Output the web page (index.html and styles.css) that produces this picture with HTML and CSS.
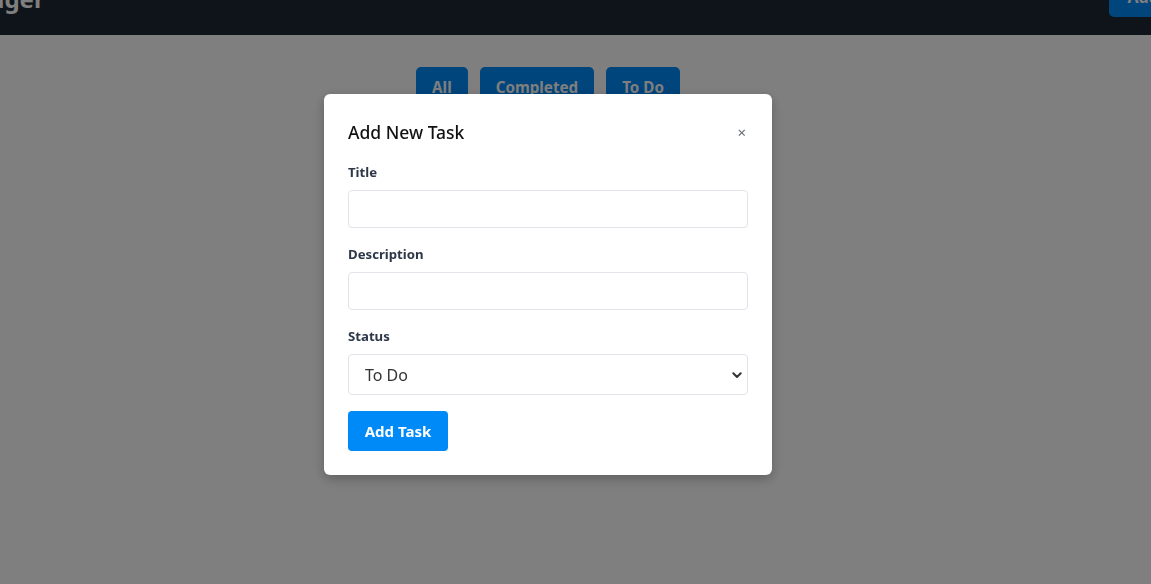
FILE: index.html
```html
<!DOCTYPE html>
<html lang="en">
<head>
<meta charset="utf-8">
<title>Task Manager</title>
<link rel="stylesheet" href="styles.css">
</head>
<body>
<header class="topbar">
  <h1 class="brand">Task Manager</h1>
  <button class="btn btn-primary topbar-btn">Add Task</button>
</header>
<main class="main">
  <div class="filters">
    <button class="btn btn-primary filter">All</button>
    <button class="btn btn-primary filter">Completed</button>
    <button class="btn btn-primary filter">To Do</button>
  </div>
</main>
<div class="overlay">
  <div class="overlay-inner">
    <div class="modal">
      <div class="modal-head">
        <h2 class="modal-title">Add New Task</h2>
        <button class="close">×</button>
      </div>
      <div class="field">
        <label class="label">Title</label>
        <input class="input" type="text">
      </div>
      <div class="field">
        <label class="label">Description</label>
        <input class="input" type="text">
      </div>
      <div class="field">
        <label class="label">Status</label>
        <div class="select-wrap">
          <select class="input select">
            <option>To Do</option>
            <option>Completed</option>
          </select>
          <svg class="chev" width="10" height="7" viewBox="0 0 10 7"><path d="M1.3 1.3 L5 5 L8.7 1.3" fill="none" stroke="#333" stroke-width="2" stroke-linecap="round" stroke-linejoin="round"/></svg>
        </div>
      </div>
      <button class="btn btn-primary submit">Add Task</button>
    </div>
  </div>
</div>
</body>
</html>
```

FILE: styles.css
```css
* { box-sizing: border-box; }
html, body { margin: 0; padding: 0; }
body {
  width: 1151px;
  height: 584px;
  overflow: hidden;
  background: #ffffff;
  font-family: "Noto Sans", "Open Sans", Arial, sans-serif;
  color: #1a202c;
}
.topbar {
  margin: -41px -90px 0 -146px;
  padding: 18px 24px;
  background: #1f2937;
  display: flex;
  align-items: center;
  justify-content: space-between;
}
.brand {
  margin: 3px 0 0 0;
  font-size: 24px;
  font-weight: 700;
  color: #ffffff;
  line-height: 32px;
}
.btn {
  font-family: inherit;
  border: none;
  border-radius: 5px;
  cursor: pointer;
  font-weight: 700;
}
.btn-primary {
  background: #008af8;
  color: #ffffff;
}
.topbar-btn {
  height: 40px;
  padding: 0 18px;
  font-size: 16px;
  width: 108px;
}
.main {
  width: 1096px;
  padding-top: 32px;
}
.filters {
  display: flex;
  justify-content: center;
  gap: 12px;
}
.filter {
  height: 40px;
  padding: 0 16px;
  font-size: 15.2px;
}
.overlay {
  position: fixed;
  inset: 0;
  background: rgba(0, 0, 0, 0.5);
}
.overlay-inner {
  width: 1096px;
  padding-top: 94px;
  display: flex;
  justify-content: center;
}
.modal {
  width: 448px;
  background: #ffffff;
  border-radius: 6px;
  padding: 24px;
  box-shadow: 0 4px 12px rgba(0, 0, 0, 0.25);
}
.modal-head {
  height: 28px;
  display: flex;
  align-items: center;
  justify-content: space-between;
  margin-bottom: 16px;
}
.modal-title {
  margin: 0;
  font-size: 17.5px;
  font-weight: 500;
  color: #111111;
  line-height: 28px;
}
.close {
  border: none;
  background: none;
  padding: 0;
  font-family: inherit;
  font-size: 15px;
  color: #666c75;
  line-height: 1;
  margin-right: 2px;
}
.field {
  display: flex;
  flex-direction: column;
  margin-bottom: 16px;
}
.label {
  font-size: 13.2px;
  font-weight: 700;
  color: #2d3748;
  line-height: 20px;
  margin-bottom: 8px;
}
.input {
  width: 400px;
  height: 38px;
  border: 1px solid #e2e4ea;
  border-radius: 4px;
  background: #ffffff;
  font-family: inherit;
  font-size: 15px;
  padding: 0 16px;
  outline: none;
}
.select-wrap {
  position: relative;
}
.select {
  height: 41px;
  appearance: none;
  -webkit-appearance: none;
  color: #333333;
  font-size: 16px;
}
.chev {
  position: absolute;
  right: 6px;
  top: 18px;
}
.submit {
  height: 40px;
  padding: 0 16px;
  font-size: 15px;
  width: 100px;
  border-radius: 4px;
}
```
